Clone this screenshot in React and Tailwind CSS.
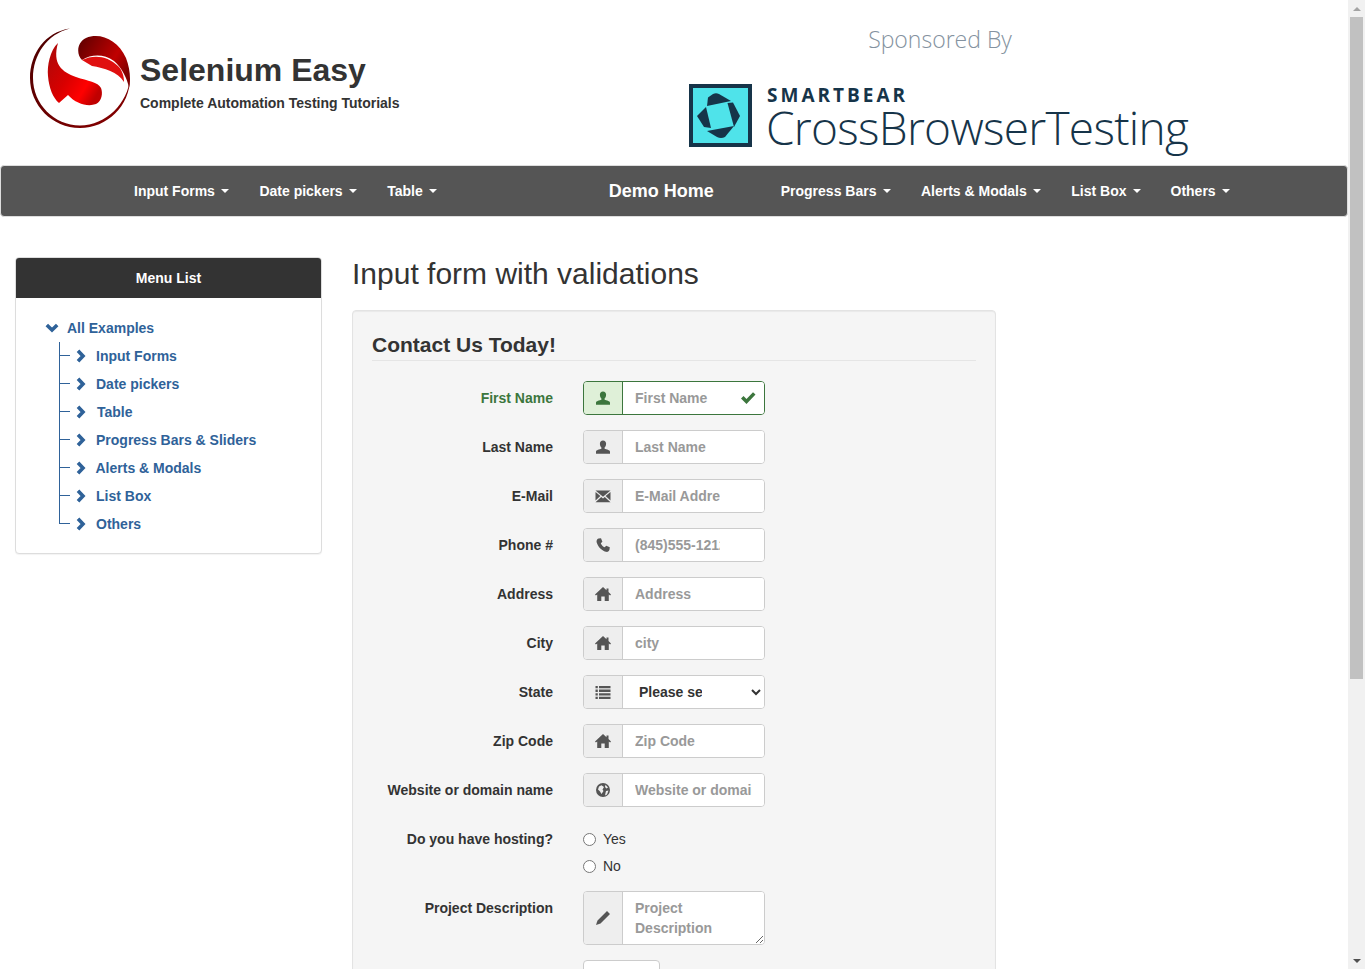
import React from "react";

const Ic = ({ children, className = "" }) => (
  <svg viewBox="0 0 16 16" className={`w-[16px] h-[16px] fill-current ${className}`}>{children}</svg>
);
const User = ({ className }) => (
  <Ic className={className}><path d="M8 1.500c-2 0-3.100 1.400-3.100 3.200 0 1.500.6 3 1.500 3.700v1.300c-1.800.7-5.400 1.100-5.400 3v2h14v-2c0-1.900-3.600-2.300-5.400-3V8.400c.9-.7 1.500-2.200 1.500-3.700 0-1.800-1.100-3.200-3.100-3.200z" /></Ic>
);
const Mail = () => (
  <Ic><path d="M.5 2.500h15L8 8.700z" /><path d="M.5 4v8.500l4.900-4.400z" /><path d="M15.500 4v8.500l-4.900-4.400z" /><path d="M.5 14.200h15L9.800 9 8 10.400 6.200 9z" /></Ic>
);
const Phone = () => (
  <Ic><path d="M3.500 1.500 6 1.200l1.400 3.500-1.600 1.500c.6 1.700 2.200 3.400 3.900 4.100l1.500-1.600 3.600 1.600-.3 2.200c-.3 1.800-2 2.900-3.700 2.300C6.300 13.300 3 9.700 1.700 5.500 1.200 3.700 2 2 3.500 1.500z" /></Ic>
);
const Home = () => (
  <Ic><path d="M8 1 11.500 4.200V2.500h2v3.500L16 8.500l-.9 1L13.800 8.400V15H9.700v-4.500H6.300V15H2.200V8.400L.9 9.500 0 8.500z" /></Ic>
);
const ListI = () => (
  <Ic><path d="M.5 2h2.300v2.300H.5zM4 2h11.500v2.300H4zM.5 5.600h2.300v2.300H.5zM4 5.600h11.500v2.300H4zM.5 9.200h2.300v2.300H.5zM4 9.200h11.500v2.300H4zM.5 12.800h2.300v2.300H.5zM4 12.800h11.500v2.300H4z" /></Ic>
);
const Globe = () => (
  <Ic><path fillRule="evenodd" d="M8 1a7 7 0 1 0 0 14A7 7 0 0 0 8 1zM4 4.500l2.500-1.200L9 5 7.500 7.500 8.500 9 6.500 12 5 9.500 3 7.500zM10.500 2.800l2.500 2.700-1.500 1-1.500-1.500zM11 9l2.500-.5-1.500 4-2 1 .5-2.500z" /></Ic>
);
const Pencil = () => (
  <Ic><path d="M12 1 15 4 5.500 13.500 1 15 2.500 10.500zM1.800 12.500 3.500 14.200 1.500 14.800z" /></Ic>
);
const Check = () => (
  <Ic><path d="M1 8.500 3.500 6l3 3L13 2.200l2.500 2.300-9 9.500z" /></Ic>
);
const ChevR = () => (
  <svg viewBox="0 0 10 14" className="w-[10px] h-[14px] fill-none stroke-current stroke-[3.600]"><path d="M2 1.800 7 7 2 12.200" /></svg>
);
const ChevD = () => (
  <svg viewBox="0 0 14 10" className="w-[14px] h-[10px] fill-none stroke-current stroke-[3.600]"><path d="M1.800 2 7 7l5.200-5" /></svg>
);
const Caret = () => <span className="ml-[6.500px] w-0 h-0 border-x-4 border-x-transparent border-t-4 border-t-white" />;

const Logo = () => (
  <svg viewBox="0 0 100 100" className="w-[100px] h-[100px] shrink-0">
    <defs>
      <linearGradient id="ring" x1="0" y1="0" x2="1" y2="1">
        <stop offset="0" stopColor="#4a0000" />
        <stop offset="1" stopColor="#8a0000" />
      </linearGradient>
      <linearGradient id="up" x1="0" y1="0" x2="1" y2="0.600">
        <stop offset="0" stopColor="#5a0000" />
        <stop offset="0.700" stopColor="#c00000" />
        <stop offset="1" stopColor="#800000" />
      </linearGradient>
      <linearGradient id="low" x1="0" y1="0" x2="1" y2="0.700">
        <stop offset="0" stopColor="#a80a0a" />
        <stop offset="0.500" stopColor="#d80000" />
        <stop offset="0.800" stopColor="#ff0000" />
        <stop offset="1" stopColor="#c00000" />
      </linearGradient>
    </defs>
    <path d="M40 0.500C15 4 0 26 0 50c0 27 22 50 50 50 27 0 50-22 50-50-2 25-24 47.500-50 47.500C24 97.500 3 76 3 50 3 27 17 6 40 0.500z" fill="url(#ring)" />
    <path d="M52 32C46 26 47 14 56 10 70 4 88 12 96 30c4 10 5 22 3 30-2-10-7-20-15-27-10-7-22-7-32-1z" fill="url(#up)" />
    <path d="M52 32c12-6 26-4 36 6 4 4 6 10 6 16-6-10-20-14-32-16z" fill="#e01010" />
    <path d="M28 15C20 22 17 38 18 48c1 12 5 22 11 27l9-8c8 9 20 12 28 9 6-3 7-11 5-16-3-6-13-7-25-11C32 44 22 36 28 15z" fill="url(#low)" />
  </svg>
);

const CbtMark = () => (
  <svg viewBox="0 0 63 63" className="w-[63px] h-[63px] shrink-0">
    <rect x="2" y="2" width="59" height="59" fill="#4fe3ea" stroke="#163449" strokeWidth="4" />
    <path d="M18 22 42 17 30 10Q27 8.500 24 10L19 13.500Z" fill="#163449" />
    <path d="M38.500 19 44 18.500 51 32 45 43Z" fill="#163449" />
    <path d="M18 47 45 42 36 53Q32 55 28 53Z" fill="#163449" />
    <path d="M17 23 22 44 15 43 8 32Z" fill="#163449" />
  </svg>
);

const NavItem = ({ children, className = "" }) => (
  <span className={`flex items-center text-[14px] font-bold text-white ${className}`}>{children}<Caret /></span>
);

const tree = ["Input Forms", "Date pickers", "Table", "Progress Bars & Sliders", "Alerts & Modals", "List Box", "Others"];

const rows = [
  { label: "First Name", icon: <User />, ph: "First Name", ok: true },
  { label: "Last Name", icon: <User />, ph: "Last Name", pad: true },
  { label: "E-Mail", icon: <Mail />, ph: "E-Mail Address", pad: true },
  { label: "Phone #", icon: <Phone />, ph: "(845)555-1212", pad: true },
  { label: "Address", icon: <Home />, ph: "Address", pad: true },
  { label: "City", icon: <Home />, ph: "city", pad: true },
];

const Label = ({ children, className = "text-[#333]" }) => (
  <label className={`w-[181px] shrink-0 pt-[7px] leading-5 text-right text-[14px] font-bold ${className}`}>{children}</label>
);

const Addon = ({ children, ok }) => (
  <span className={`w-[39px] shrink-0 flex items-center justify-center border-r ${ok ? "bg-[#dff0d8] border-[#3c763d] text-[#3c763d]" : "bg-[#eeeeee] border-[#cccccc] text-[#555555]"}`}>{children}</span>
);

const Group = ({ children, ok, className = "h-[34px]" }) => (
  <div className={`relative w-[182px] flex border rounded overflow-hidden bg-white ${ok ? "border-[#3c763d]" : "border-[#cccccc]"} ${className}`}>{children}</div>
);

const inputCls = "flex-1 min-w-0 h-full pl-3 bg-white text-[14px] font-bold text-[#555] outline-none placeholder:text-[#999999] placeholder:opacity-100";

const Row = ({ label, icon, ph, ok, pad }) => (
  <div className="flex gap-[30px] mb-[15px]">
    <Label className={ok ? "text-[#3c763d]" : "text-[#333]"}>{label}</Label>
    <Group ok={ok}>
      <Addon ok={ok}>{icon}</Addon>
      <input placeholder={ph} className={`${inputCls} ${ok || pad ? "pr-[44px]" : "pr-3"}`} />
      {ok && <span className="absolute right-[8px] top-[8px] text-[#3c763d]"><Check /></span>}
    </Group>
  </div>
);

export default function App() {
  return (
    <div className="flex h-[969px] overflow-hidden bg-white font-['Liberation_Sans',Arial,sans-serif] text-[#333]">
      <div className="w-[1348px] shrink-0">
        <header className="flex h-[165px]">
          <div className="flex pl-[30px] pt-[28px] w-[640px]">
            <Logo />
            <div className="ml-[10px] pt-[21px]">
              <div className="text-[32px] leading-[42px] font-bold text-[#333]">Selenium Easy</div>
              <div className="mt-[2px] text-[14px] leading-5 font-bold text-[#333]">Complete Automation Testing Tutorials</div>
            </div>
          </div>
          <div className="flex-1 flex flex-col pt-[23px]">
            <div className="ml-[-108px] text-center text-[23px] leading-[33px] font-['Open_Sans',sans-serif] font-light text-[#8492a0]">Sponsored By</div>
            <div className="flex mt-[28px] ml-[49px]">
              <CbtMark />
              <div className="ml-[15px] text-[#163449] font-['Open_Sans',sans-serif]">
                <div className="text-[19px] leading-[20px] mt-[1px] font-bold tracking-[3px]">SMARTBEAR</div>
                <div className="text-[46px] leading-[44px] -ml-px font-light tracking-[-0.700px]">CrossBrowserTesting</div>
              </div>
            </div>
          </div>
        </header>

        <nav className="w-[1348px] h-[52px] flex items-center rounded bg-[#555555] border border-[#dddddd] pl-[133px]">
          <NavItem>Input Forms</NavItem>
          <NavItem className="ml-[30px]">Date pickers</NavItem>
          <NavItem className="ml-[30px]">Table</NavItem>
          <span className="ml-[171.500px] text-[18px] font-bold text-white">Demo Home</span>
          <NavItem className="ml-[67px]">Progress Bars</NavItem>
          <NavItem className="ml-[30px]">Alerts &amp; Modals</NavItem>
          <NavItem className="ml-[30px]">List Box</NavItem>
          <NavItem className="ml-[29.500px]">Others</NavItem>
        </nav>

        <div className="flex pl-[15px] pt-[40px] gap-[30px] items-start">
          <aside className="w-[307px] h-[297px] shrink-0 border border-[#dddddd] rounded overflow-hidden bg-white shadow-[0_1px_1px_rgba(0,0,0,0.05)]">
            <div className="h-[40px] flex items-center justify-center bg-[#333333] text-white text-[14px] font-bold">Menu List</div>
            <div className="pl-[29px] pt-[16px] text-[14px] font-bold text-[#2f6299]">
              <div className="h-[28px] flex items-center">
                <ChevD />
                <span className="ml-[8px]">All Examples</span>
              </div>
              <ul className="ml-[14px]">
                {tree.map((t, i) => (
                  <li key={t} className="h-[28px] flex items-center">
                    <span className="w-[11px] h-full flex flex-col shrink-0">
                      <span className="h-[14px] w-[11px] border-l border-b border-[#2f6299]" />
                      {i < tree.length - 1 && <span className="h-[14px] border-l border-[#2f6299]" />}
                    </span>
                    <span className="ml-[6px]"><ChevR /></span>
                    <span className={i === 2 ? "ml-[11px]" : i === 4 ? "ml-[9.500px]" : "ml-[10px]"}>{t}</span>
                  </li>
                ))}
              </ul>
            </div>
          </aside>

          <main className="w-[644px] shrink-0">
            <h2 className="text-[30px] leading-[33px] font-normal text-[#333]">Input form with validations</h2>
            <form className="mt-[20px] h-[800px] bg-[#f5f5f5] border border-[#e3e3e3] rounded pt-[19px] px-[19px] shadow-[inset_0_1px_1px_rgba(0,0,0,0.05)]">
              <legend className="w-full h-[31px] leading-[30px] text-[21px] font-bold text-[#333] border-b border-[#e5e5e5] mb-[20px]">Contact Us Today!</legend>
              {rows.map((r) => <Row key={r.label} {...r} />)}
              <div className="flex gap-[30px] mb-[15px]">
                <Label>State</Label>
                <Group>
                  <Addon><ListI /></Addon>
                  <select className="flex-1 min-w-0 h-full pl-3 pr-[46px] bg-white text-[14px] font-bold text-[#333] outline-none">
                    <option>Please select your state</option>
                  </select>
                </Group>
              </div>
              <Row label="Zip Code" icon={<Home />} ph="Zip Code" pad />
              <Row label="Website or domain name" icon={<Globe />} ph="Website or domain name" />
              <div className="flex gap-[30px] mb-[15px]">
                <Label>Do you have hosting?</Label>
                <div className="pt-[7px] text-[14px] leading-5 text-[#333]">
                  <label className="flex items-center h-5 mb-[7px]"><input type="radio" name="hosting" className="m-0 w-[13px] h-[13px]" /><span className="ml-[7px]">Yes</span></label>
                  <label className="flex items-center h-5"><input type="radio" name="hosting" className="m-0 w-[13px] h-[13px]" /><span className="ml-[7px]">No</span></label>
                </div>
              </div>
              <div className="flex gap-[30px] mb-[15px]">
                <Label>Project Description</Label>
                <Group className="h-[54px]">
                  <Addon><Pencil /></Addon>
                  <textarea placeholder="Project Description" rows={2} className="flex-1 min-w-0 h-full pl-3 pr-3 py-[6px] leading-5 bg-white text-[14px] font-bold text-[#555] outline-none placeholder:text-[#999999] placeholder:opacity-100" />
                </Group>
              </div>
              <div className="pl-[211px]">
                <button type="button" className="w-[77px] h-[34px] bg-white border border-[#cccccc] rounded text-[14px] text-[#333]">Send</button>
              </div>
            </form>
          </main>
        </div>
      </div>

      <div className="w-[17px] shrink-0 h-full flex flex-col items-center bg-[#f1f1f1]">
        <div className="h-[17px] shrink-0 flex items-center justify-center">
          <span className="w-0 h-0 border-x-[4px] border-x-transparent border-b-[4px] border-b-[#a3a3a3]" />
        </div>
        <div className="w-[13px] h-[662px] shrink-0 bg-[#c1c1c1]" />
        <div className="mt-auto h-[17px] shrink-0 flex items-center justify-center">
          <span className="w-0 h-0 border-x-[4px] border-x-transparent border-t-[4px] border-t-[#505050]" />
        </div>
      </div>
    </div>
  );
}
